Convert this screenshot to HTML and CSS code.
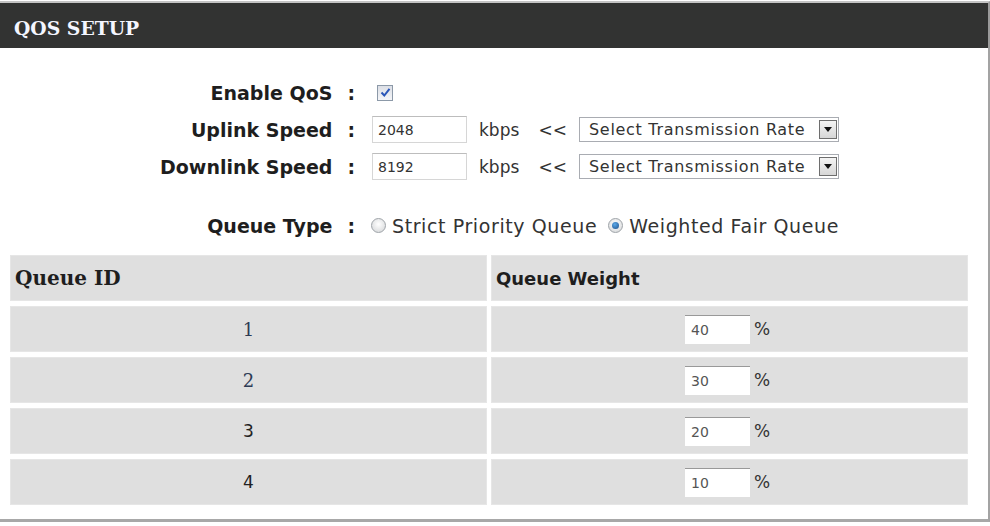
FILE: index.html
```html
<!DOCTYPE html>
<html>
<head>
<meta charset="utf-8">
<link rel="stylesheet" href="styles.css">
</head>
<body>
<div class="page">
  <div class="titlebar"><h1 class="title">QOS SETUP</h1></div>
  <div class="box">
    <div class="form">
      <div class="row">
        <span class="label">Enable QoS<span class="colon">:</span></span>
        <span class="checkbox"><svg width="11" height="11" viewBox="0 0 11 11"><path d="M1.5 5.5 L4.3 8.5 L9.5 1.8" fill="none" stroke="#2a56b8" stroke-width="2"/></svg></span>
      </div>
      <div class="row">
        <span class="label">Uplink Speed<span class="colon">:</span></span>
        <span class="textbox">2048</span>
        <span class="unit"><span>kbps</span><span>&lt;&lt;</span></span>
        <span class="select"><span class="select-text">Select Transmission Rate</span><span class="select-btn"><svg width="8" height="5" viewBox="0 0 8 5"><path d="M0 0 H8 L4 5 Z" fill="#111"/></svg></span></span>
      </div>
      <div class="row">
        <span class="label">Downlink Speed<span class="colon">:</span></span>
        <span class="textbox">8192</span>
        <span class="unit"><span>kbps</span><span>&lt;&lt;</span></span>
        <span class="select"><span class="select-text">Select Transmission Rate</span><span class="select-btn"><svg width="8" height="5" viewBox="0 0 8 5"><path d="M0 0 H8 L4 5 Z" fill="#111"/></svg></span></span>
      </div>
      <div class="row row-queue">
        <span class="label">Queue Type<span class="colon">:</span></span>
        <span class="radio"></span>
        <span class="radio-text">Strict Priority Queue</span>
        <span class="radio radio-on"><span class="dot"></span></span>
        <span class="radio-text">Weighted Fair Queue</span>
      </div>
    </div>
    <table class="queues">
      <tr>
        <th class="th-id">Queue ID</th>
        <th class="th-weight">Queue Weight</th>
      </tr>
      <tr>
        <td class="id">1</td>
        <td class="weight"><span class="wbox">40</span><span class="pct">%</span></td>
      </tr>
      <tr>
        <td class="id">2</td>
        <td class="weight"><span class="wbox">30</span><span class="pct">%</span></td>
      </tr>
      <tr>
        <td class="id id-sans">3</td>
        <td class="weight"><span class="wbox">20</span><span class="pct">%</span></td>
      </tr>
      <tr>
        <td class="id id-sans">4</td>
        <td class="weight"><span class="wbox">10</span><span class="pct">%</span></td>
      </tr>
    </table>
  </div>
</div>
</body>
</html>
```
FILE: styles.css
```css
html, body {
  margin: 0;
  padding: 0;
  background: #ffffff;
}
body {
  font-family: "DejaVu Sans", Verdana, sans-serif;
  color: #222;
}
.page {
  width: 990px;
  padding-top: 1px;
}
.titlebar {
  height: 45px;
  background: #323332;
  border-top: 2px solid #c4c4c4;
  border-right: 2px solid #9a9a9a;
  display: flex;
  align-items: center;
}
.title {
  margin: 4px 0 0 14px;
  font-family: "DejaVu Serif", "Liberation Serif", serif;
  font-weight: bold;
  font-size: 18.8px;
  color: #f4f6ff;
}
.box {
  width: 988px;
  border-right: 2px solid #a3a3a3;
  border-bottom: 3px solid #a8a8a8;
  padding-bottom: 9px;
}
.form {
  padding-top: 26px;
  display: flex;
  flex-direction: column;
}
.row {
  display: flex;
  align-items: center;
  height: 37px;
}
.row-queue {
  margin-top: 22px;
}
.label {
  width: 357px;
  text-align: right;
  font-weight: bold;
  font-size: 19px;
  color: #1e1e1e;
  margin-right: 18px;
  white-space: nowrap;
}
.colon {
  margin-left: 15px;
  margin-right: 2px;
}
.checkbox {
  width: 14px;
  height: 14px;
  border: 1px solid #8c99a8;
  background: linear-gradient(#dcdfe6, #f4f5f8);
  display: flex;
  align-items: center;
  justify-content: center;
  margin-left: 2px;
}
.textbox {
  width: 88px;
  height: 25px;
  border: 1px solid #d6d6d6;
  border-top-color: #bdbdbd;
  font-size: 14px;
  color: #333;
  padding-left: 5px;
  display: flex;
  align-items: center;
  margin-left: -3px;
}
.unit {
  font-size: 17px;
  color: #333;
  width: 88px;
  margin-left: 12px;
  margin-right: 12px;
  display: flex;
  justify-content: space-between;
}
.select {
  width: 258px;
  height: 23px;
  border: 1px solid #a9acb2;
  display: flex;
  align-items: center;
  justify-content: space-between;
}
.select-text {
  font-size: 16px;
  color: #333;
  padding-left: 9px;
  letter-spacing: 0.7px;
}
.select-btn {
  width: 16px;
  height: 17px;
  border: 1px solid #6e6e6e;
  background: linear-gradient(#f4f4f4, #d6d6d6);
  margin-right: 1px;
  display: flex;
  align-items: center;
  justify-content: center;
}
.radio {
  width: 13px;
  height: 13px;
  border-radius: 50%;
  border: 1px solid #9ea3a8;
  background: radial-gradient(circle at 50% 40%, #ffffff, #d2d4d6);
  margin-left: -4px;
  display: flex;
  align-items: center;
  justify-content: center;
}
.radio-on {
  margin-left: 11px;
}
.dot {
  width: 7px;
  height: 7px;
  border-radius: 50%;
  background: radial-gradient(circle at 40% 35%, #5aa8e8, #1d4f8a);
}
.radio-text {
  font-size: 19px;
  letter-spacing: 0.6px;
  color: #333;
  margin-left: 6px;
}
.queues {
  margin-left: 6px;
  width: 966px;
  border-collapse: separate;
  border-spacing: 4px 5px;
  margin-top: 6px;
}
.queues th, .queues td {
  background: #dfdfdf;
  border: 1px solid #e6e6e6;
  padding: 0;
  width: 50%;
}
.queues th {
  height: 44px;
  text-align: left;
  font-weight: bold;
  color: #1e1e1e;
  padding-left: 4px;
}
.th-id {
  font-family: "DejaVu Serif", "Liberation Serif", serif;
  font-size: 20px;
}
.th-weight {
  font-family: "DejaVu Sans", Verdana, sans-serif;
  font-size: 18px;
}
.queues td {
  height: 44px;
}
.id {
  text-align: center;
  font-family: "DejaVu Serif", "Liberation Serif", serif;
  font-size: 18px;
  color: #2d3b55;
}
.id-sans {
  font-family: "DejaVu Sans", Verdana, sans-serif;
  font-size: 17px;
  color: #222;
}
.weight {
  text-align: center;
}
.wbox {
  display: inline-block;
  vertical-align: middle;
  width: 59px;
  height: 28px;
  line-height: 28px;
  background: #fff;
  border-top: 1px solid #999;
  text-align: left;
  padding-left: 6px;
  font-size: 14px;
  color: #555;
}
.pct {
  display: inline-block;
  vertical-align: middle;
  font-size: 17px;
  color: #333;
  margin-left: 4px;
  width: 20px;
  text-align: left;
}
```
